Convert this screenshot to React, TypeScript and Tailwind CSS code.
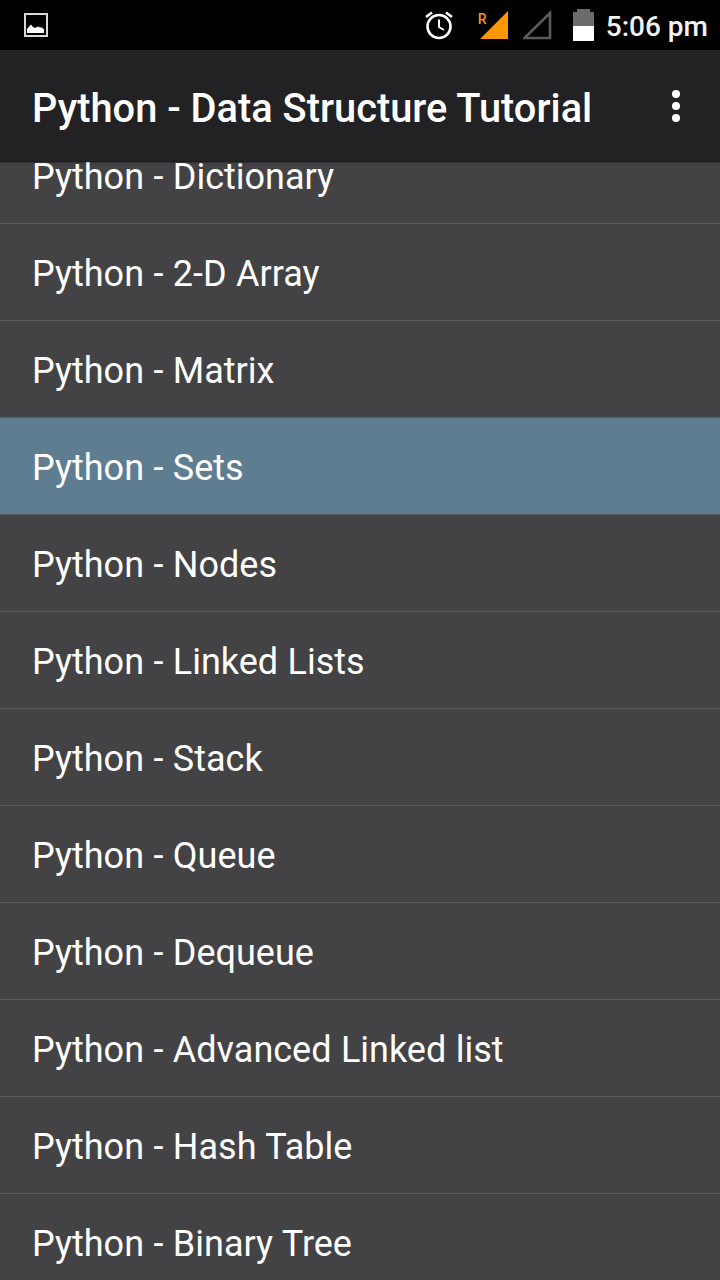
const topics = [
  'Python - Dictionary',
  'Python - 2-D Array',
  'Python - Matrix',
  'Python - Sets',
  'Python - Nodes',
  'Python - Linked Lists',
  'Python - Stack',
  'Python - Queue',
  'Python - Dequeue',
  'Python - Advanced Linked list',
  'Python - Hash Table',
  'Python - Binary Tree',
]

function StatusBar() {
  return (
    <div className="flex h-[50px] shrink-0 items-center justify-between bg-black pl-6 pr-3">
      <svg width="24" height="24" viewBox="0 0 24 24">
        <rect x="1" y="1" width="22" height="22" fill="none" stroke="#d8d8d8" strokeWidth="2" />
        <path d="M3 20v-4l4-4.500 2 2.500 2 1 3-1.500 2 1 2 0 2 2v3.500z" fill="#fff" />
      </svg>
      <div className="flex items-center">
        <svg width="30" height="30" viewBox="0 0 30 30" className="mr-[25px]">
          <circle cx="15" cy="16.500" r="11.500" fill="none" stroke="#fff" strokeWidth="2.600" />
          <path d="M15 9.500v7.500l5 3" fill="none" stroke="#fff" strokeWidth="2" />
          <path d="M2 7l6-4.500M28 7l-6-4.500" fill="none" stroke="#fff" strokeWidth="2.600" />
        </svg>
        <div className="relative mr-[14px] h-[30px] w-[30px]">
          <span className="absolute -left-[1px] top-[2px] text-[14px] font-medium leading-[14px] text-[#f7941d]">R</span>
          <svg width="30" height="30" viewBox="0 0 30 30">
            <path d="M1 29L29 1v28z" fill="#ff9800" />
          </svg>
        </div>
        <svg width="30" height="30" viewBox="0 0 30 30" className="mr-[20px]">
          <path d="M1.500 28L27 3v25z" fill="none" stroke="#5a5a5a" strokeWidth="2.600" />
        </svg>
        <div className="mr-[12px] flex h-[32px] w-[21px] flex-col items-center">
          <div className="h-[3px] w-[13px] bg-[#6b6b6b]" />
          <div className="h-[14px] w-full bg-[#6b6b6b]" />
          <div className="h-[15px] w-full bg-white" />
        </div>
        <span className="pt-[3px] text-[28px] font-medium leading-none text-[#f2f2f2]">5:06 pm</span>
      </div>
    </div>
  )
}

export default function App() {
  return (
    <div className="flex h-[1280px] w-[720px] flex-col overflow-hidden bg-[#434244] font-['Roboto',sans-serif]">
      <StatusBar />
      <div className="z-10 flex h-[112px] shrink-0 items-center justify-between border-b border-[#1a191b] bg-[#222123] pl-8 pr-[40px] shadow-[0_1px_2px_rgba(0,0,0,0.25)]">
        <h1 className="pt-[6px] text-[39.8px] font-medium leading-none text-white">Python - Data Structure Tutorial</h1>
        <div className="flex flex-col gap-[4px]">
          <span className="h-2 w-2 rounded-full bg-white" />
          <span className="h-2 w-2 rounded-full bg-white" />
          <span className="h-2 w-2 rounded-full bg-white" />
        </div>
      </div>
      <ul className="-mt-[35px] shrink-0">
        {topics.map(t => (
          <li
            key={t}
            className={
              'flex h-[97px] items-center border-b border-[#59585a] pl-8 pt-[4px] text-[36px] leading-none text-white [word-spacing:0.5px] ' +
              (t === 'Python - Sets' ? 'bg-[#5f7d91]' : '')
            }
          >
            {t}
          </li>
        ))}
      </ul>
    </div>
  )
}
